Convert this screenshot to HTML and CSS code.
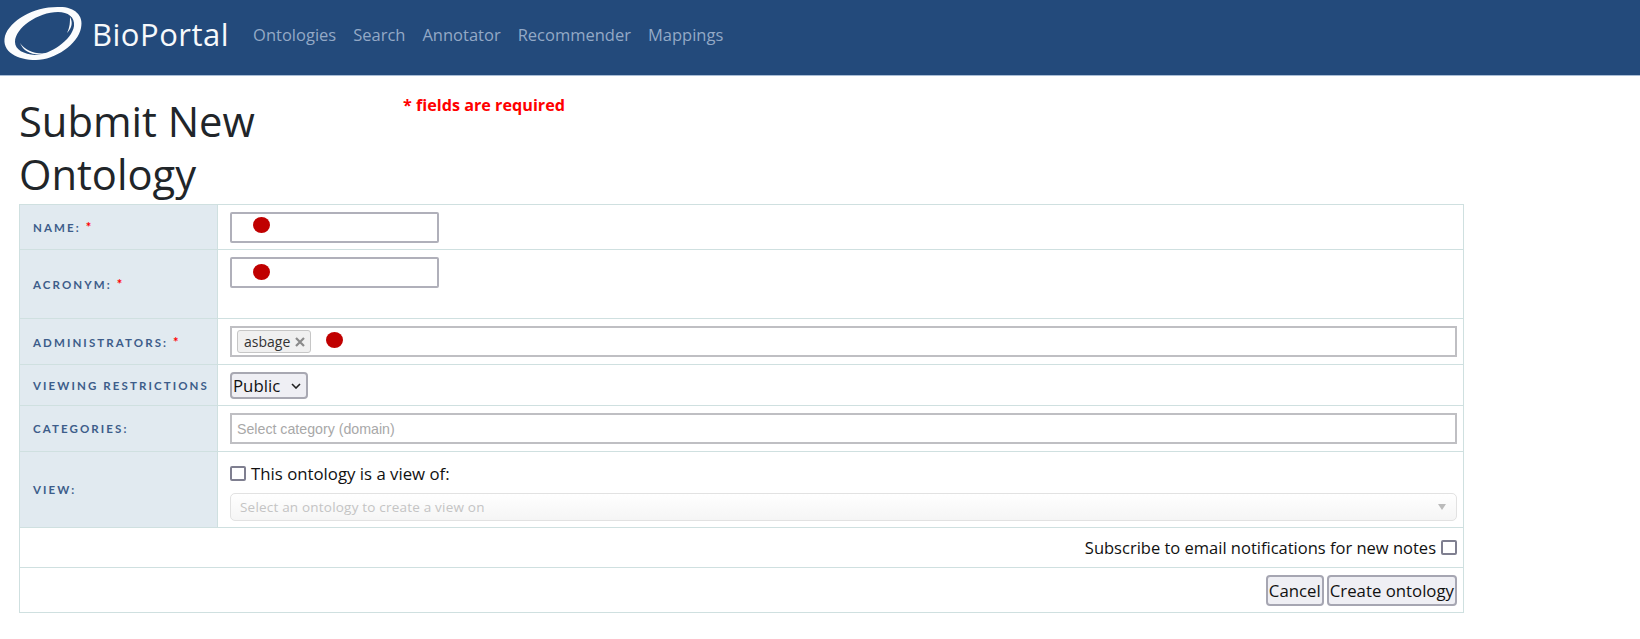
FILE: index.html
```html
<!DOCTYPE html>
<html lang="en">
<head>
<meta charset="utf-8">
<title>Submit New Ontology - BioPortal</title>
<link rel="stylesheet" href="styles.css">
</head>
<body>
<header class="navbar">
  <a class="brand" href="#">
    <svg class="logo" viewBox="0 0 86 68" width="86" height="68" aria-hidden="true">
      <path fill="#fbfcfd" fill-rule="evenodd" d="M5 36C10 20 35 6 60 7 74 7 84 15 81 28 78 44 55 60 36 60 18 60 1 52 5 36ZM15 42C15 50 24 54 35 55 50 55 72 40 74 26 75 17 68 12 58 12 38 12 15 28 15 42Z"/>
      <path fill="#fbfcfd" d="M70 17C73 22 72 28 67 33 70 27 70 22 70 17ZM20 43C25 50 35 55 48 53 36 57 24 53 20 43Z"/>
      <path fill="none" stroke="#234a7b" stroke-width="1" d="M20 17 28 11"/>
    </svg>
    <span class="brand-name">BioPortal</span>
  </a>
  <nav class="nav-links">
    <a href="#">Ontologies</a>
    <a href="#">Search</a>
    <a href="#">Annotator</a>
    <a href="#">Recommender</a>
    <a href="#">Mappings</a>
  </nav>
</header>

<main class="page">
  <div class="title-row">
    <h1 class="title">Submit New Ontology</h1>
    <div class="required-note">* fields are required</div>
  </div>

  <table class="form-table">
    <tr class="row-name">
      <th>Name: <span class="req">*</span></th>
      <td><div class="field short"><span class="dot"></span></div></td>
    </tr>
    <tr class="row-acronym">
      <th>Acronym: <span class="req">*</span></th>
      <td class="top"><div class="field short"><span class="dot low"></span></div></td>
    </tr>
    <tr class="row-admin">
      <th>Administrators: <span class="req">*</span></th>
      <td>
        <div class="field wide multi">
          <span class="tag">asbage
            <svg class="tag-x" viewBox="0 0 10 10" width="10" height="10" aria-hidden="true"><path d="M1 1 9 9M9 1 1 9"/></svg>
          </span>
          <span class="dot"></span>
        </div>
      </td>
    </tr>
    <tr class="row-view-res">
      <th>Viewing Restrictions</th>
      <td>
        <div class="select-wrap">
          <select class="native"><option>Public</option></select>
          <svg class="chevron" viewBox="0 0 10 6" width="10" height="6" aria-hidden="true"><path d="M1 1 5 5 9 1"/></svg>
        </div>
      </td>
    </tr>
    <tr class="row-cat">
      <th>Categories:</th>
      <td><div class="field wide multi placeholder">Select category (domain)</div></td>
    </tr>
    <tr class="row-view">
      <th>View:</th>
      <td class="view-cell">
        <label class="check-line view-line"><span class="check"></span>This ontology is a view of:</label>
        <div class="chosen"><span>Select an ontology to create a view on</span><span class="caret"></span></div>
      </td>
    </tr>
    <tr class="row-sub">
      <td colspan="2" class="right">
        <label class="check-line end">Subscribe to email notifications for new notes<span class="check after"></span></label>
      </td>
    </tr>
    <tr class="row-actions">
      <td colspan="2" class="right">
        <div class="actions">
          <button class="btn" type="button">Cancel</button>
          <button class="btn" type="button">Create ontology</button>
        </div>
      </td>
    </tr>
  </table>
</main>
</body>
</html>
```
FILE: styles.css
```css
* { box-sizing: border-box; }
html, body { margin: 0; padding: 0; background: #fff; }
body { font-family: "Open Sans", "Noto Sans", sans-serif; color: #1a1a1a; font-size: 16px; height: 639px; overflow: hidden; }

.navbar { height: 76px; background: #234a7b; border-bottom: 1px solid #a9bdd6; display: flex; align-items: center; }
.brand { display: flex; align-items: center; text-decoration: none; }
.logo { display: block; margin-top: -8px; }
.brand-name { font-size: 31px; letter-spacing: .5px; margin: -7px 0 0 6px; color: #f7f9fb; font-weight: 400; }
.nav-links { display: flex; gap: 17px; margin: -6px 0 0 24px; }
.nav-links a { color: #93a9c6; text-decoration: none; font-size: 16.5px; }

.page { padding: 0 0 0 19px; }
.title-row { display: flex; height: 128px; }
.title { margin: 18px 0 0 0; width: 384px; font-size: 41.7px; font-weight: 400; line-height: 53px; color: #212529; }
.required-note { color: #f00; font-weight: 700; font-size: 16.2px; margin-top: 18px; }

.form-table { border-collapse: collapse; width: 1445px; table-layout: fixed; border: 1px solid #cfe0e0; }
.form-table th, .form-table td { border: 1px solid #cfe0e0; padding: 0 6px 0 12px; vertical-align: middle; }
.form-table th { width: 198px; padding-left: 13px; background: #e1eaf0; text-align: left; font-family: "Lato", sans-serif; font-size: 11.5px; font-weight: 700; letter-spacing: 2.1px; text-transform: uppercase; color: #3d5d8a; white-space: nowrap; }
.form-table td.top { vertical-align: top; padding-top: 7px; }
.form-table td.right { text-align: right; }
.form-table td.view-cell { padding-top: 4px; }
.req { color: #f00; font-size: 13px; }

.row-name { height: 45px; }
.row-acronym { height: 69px; }
.row-admin { height: 46px; }
.row-view-res { height: 41px; }
.row-cat { height: 46px; }
.row-view { height: 76px; }
.row-sub { height: 40px; }
.row-actions { height: 45px; }

.field { position: relative; height: 31px; background: #fff; border: 2px solid #b0b0ba; border-radius: 2px; display: flex; align-items: center; }
.field.short { width: 209px; }
.field.wide { width: 1227px; border-color: #bfbfc3; border-radius: 0; }
.dot { position: absolute; top: 3px; left: 21px; width: 17px; height: 16px; border-radius: 50%; background: #c00000; }
.dot.low { top: 5px; }
.multi .dot { left: 94px; top: 4px; }
.tag { display: inline-flex; align-items: center; height: 23px; margin-left: 5px; padding: 0 5px 0 6px; border: 1px solid #c6c6c6; border-radius: 3px; background: #f0f0f0; font-size: 14px; color: #333; }
.tag-x { margin-left: 5px; }
.tag-x path { fill: none; stroke: #8a8a8a; stroke-width: 2.2; }
.placeholder { font-family: "Liberation Sans", sans-serif; font-size: 14.2px; color: #a8a8a8; padding-left: 5px; }

.select-wrap { position: relative; width: 78px; height: 27px; }
.native { display: block; appearance: none; width: 100%; height: 100%; font-family: "Open Sans", sans-serif; font-size: 16.8px; color: #111; background: #efeff4; border: 2px solid #a8a8b2; border-radius: 4px; padding: 0 0 0 1px; }
.chevron { position: absolute; top: 11px; right: 7px; pointer-events: none; }
.chevron path { fill: none; stroke: #222; stroke-width: 1.6; }

.check-line { display: flex; align-items: center; font-size: 16.5px; color: #111; line-height: 22px; }
.view-line { font-size: 16.8px; }
.check-line.end { justify-content: flex-end; }
.check { flex: none; width: 16px; height: 15px; border: 2px solid #7f7f90; border-radius: 2px; background: #fff; margin-right: 5px; }
.check.after { margin: 0 0 0 5px; }

.chosen { display: flex; justify-content: space-between; align-items: center; width: 1227px; height: 28px; margin-top: 8px; padding: 0 10px 0 9px; border: 1px solid #e2e2e2; border-radius: 5px; background: linear-gradient(#fff, #f5f5f5); font-size: 13.5px; color: #c4c4c4; letter-spacing: .2px; }
.caret { width: 0; height: 0; border-left: 4px solid transparent; border-right: 4px solid transparent; border-top: 6px solid #bbb; }

.actions { display: flex; justify-content: flex-end; gap: 3px; }
.btn { height: 31px; padding: 0 1px; font-family: "Open Sans", sans-serif; font-size: 16.8px; color: #111; background: #efeff4; border: 2px solid #a6a6b2; border-radius: 4px; }
```
